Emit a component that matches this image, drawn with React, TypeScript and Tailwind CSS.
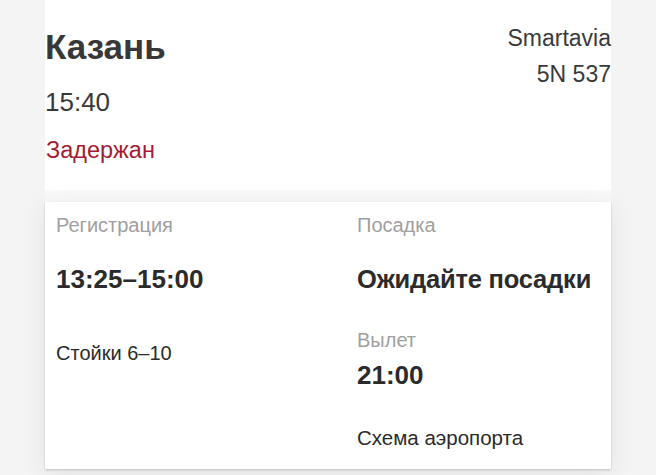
export default function App() {
  return (
    <div
      className="min-h-[475px] w-full bg-[#f4f4f4] text-[#333333]"
      style={{ fontFamily: '"Liberation Sans", Arial, sans-serif' }}
    >
      <div className="mx-auto w-[566px] bg-[#f9f9f9]">
        {/* flight header */}
        <div className="flex items-start justify-between bg-white pb-[28px]">
          <div className="flex flex-col pt-[29px]">
            <div className="text-[35px] font-bold leading-[35px] text-[#383838]">Казань</div>
            <div className="mt-[25px] text-[26px] leading-[26px] text-[#383838]">15:40</div>
            <div className="mt-[24px] pl-[1px] text-[23.5px] leading-[23px] text-[#a51c32]">Задержан</div>
          </div>
          <div className="flex flex-col items-end pt-[20px] text-[23px] leading-[36px] text-[#3a3a3a]">
            <div>Smartavia</div>
            <div>5N 537</div>
          </div>
        </div>

        {/* check-in and boarding card */}
        <div className="mt-[12px] h-[267px] bg-white shadow-[0_1px_2px_rgba(0,0,0,0.18),0_4px_24px_rgba(0,0,0,0.08)]">
          <div className="grid grid-cols-[301px_1fr] pl-[11px] pt-[13px]">
            <div className="flex flex-col">
              <div className="text-[20px] leading-[20px] text-[#a0a0a0]">Регистрация</div>
              <div className="mt-[31px] text-[26px] font-bold leading-[26px] text-[#2b2b2b]">13:25–15:00</div>
              <div className="mt-[51px] text-[20px] leading-[20px] text-[#2b2b2b]">Стойки 6–10</div>
            </div>
            <div className="flex flex-col">
              <div className="text-[20px] leading-[20px] text-[#a0a0a0]">Посадка</div>
              <div className="mt-[31px] text-[25.5px] font-bold leading-[26px] tracking-[-0.2px] text-[#2b2b2b]">Ожидайте посадки</div>
              <div className="mt-[38px] text-[20px] leading-[20px] text-[#a0a0a0]">Вылет</div>
              <div className="mt-[12px] text-[26px] font-bold leading-[26px] text-[#2b2b2b]">21:00</div>
              <div className="mt-[40px] text-[20.5px] leading-[20.5px] text-[#2b2b2b]">Схема аэропорта</div>
            </div>
          </div>
        </div>
      </div>
    </div>
  );
}
